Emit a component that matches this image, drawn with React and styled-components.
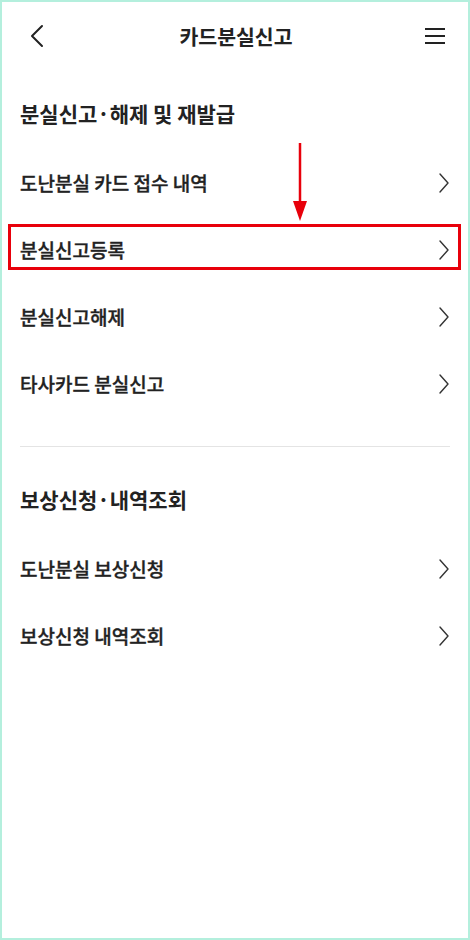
import styled, { createGlobalStyle } from 'styled-components'

const GlobalStyle = createGlobalStyle`
    html, body {
        margin: 0;
        padding: 0;
        background: #ffffff;
    }
    body {
        font-family: "Noto Sans CJK KR", "Noto Sans", sans-serif;
        color: #222222;
    }
`

const Frame = styled.div`
    position: relative;
    width: 470px;
    height: 940px;
    box-sizing: border-box;
    background: #ffffff;
    box-shadow: inset 0 0 0 2px #b4efdd;
    overflow: hidden;
`

const Header = styled.header`
    display: flex;
    align-items: center;
    justify-content: space-between;
    height: 72px;
    padding: 0 22px 0 24px;
`

const Title = styled.h1`
    margin: 0;
    font-size: 20.5px;
    font-weight: 700;
    color: #222;
`

const IconButton = styled.button`
    display: flex;
    align-items: center;
    justify-content: center;
    width: 26px;
    height: 26px;
    padding: 0;
    border: 0;
    background: none;
    color: #222;
`

const Section = styled.section`
    padding-top: ${p => p.$top}px;
`

const SectionTitle = styled.h2`
    margin: 0 0 22px;
    padding: 0 20px;
    font-size: 21px;
    line-height: 28px;
    font-weight: 700;
    color: #222;
`

const Row = styled.div`
    position: relative;
    display: flex;
    align-items: center;
    justify-content: space-between;
    height: 67px;
    padding: 0 20px;
    font-size: 19px;
    font-weight: 500;
    color: #222;
    -webkit-text-stroke: 0.35px #222;

    ${p => p.$marked && `
        &::after {
            content: '';
            position: absolute;
            top: 8px;
            bottom: 13px;
            left: 8px;
            right: 9px;
            border: 3px solid #e8000b;
        }
    `}
`

const Divider = styled.hr`
    margin: 29px 20px 0;
    border: 0;
    border-top: 1px solid #e4e4e4;
`

const Arrow = styled.svg`
    position: absolute;
    left: 292px;
    top: 143px;
`

const Chevron = () => (
    <svg width="12" height="22" viewBox="0 0 12 22" fill="none">
        <path d="M2 2 L10 11 L2 20" stroke="#333" strokeWidth="1.4" strokeLinecap="round" strokeLinejoin="round" />
    </svg>
)

const lostItems = [
    { label: '도난분실 카드 접수 내역' },
    { label: '분실신고등록', marked: true },
    { label: '분실신고해제' },
    { label: '타사카드 분실신고' },
]

const rewardItems = [
    { label: '도난분실 보상신청' },
    { label: '보상신청 내역조회' },
]

export default function App() {
    return (
        <>
            <GlobalStyle />
            <Frame>
                <Header>
                    <IconButton aria-label="뒤로">
                        <svg width="16" height="24" viewBox="0 0 16 24" fill="none">
                            <path d="M13 2 L3 12 L13 22" stroke="#222" strokeWidth="2" strokeLinecap="round" strokeLinejoin="round" />
                        </svg>
                    </IconButton>
                    <Title>카드분실신고</Title>
                    <IconButton aria-label="메뉴">
                        <svg width="22" height="18" viewBox="0 0 22 18" fill="none">
                            <path d="M1 2 H21 M1 9 H21 M1 16 H21" stroke="#222" strokeWidth="2" />
                        </svg>
                    </IconButton>
                </Header>

                <Section $top={27}>
                    <SectionTitle>분실신고·해제 및 재발급</SectionTitle>
                    {lostItems.map(item => (
                        <Row key={item.label} $marked={item.marked}>
                            <span>{item.label}</span>
                            <Chevron />
                        </Row>
                    ))}
                </Section>

                <Divider />

                <Section $top={38}>
                    <SectionTitle>보상신청·내역조회</SectionTitle>
                    {rewardItems.map(item => (
                        <Row key={item.label}>
                            <span>{item.label}</span>
                            <Chevron />
                        </Row>
                    ))}
                </Section>

                <Arrow width="16" height="80" viewBox="0 0 16 80">
                    <path d="M8 0 V62" stroke="#e8000b" strokeWidth="2.5" />
                    <path d="M1 58 L15 58 L8 78 Z" fill="#e8000b" />
                </Arrow>
            </Frame>
        </>
    )
}
